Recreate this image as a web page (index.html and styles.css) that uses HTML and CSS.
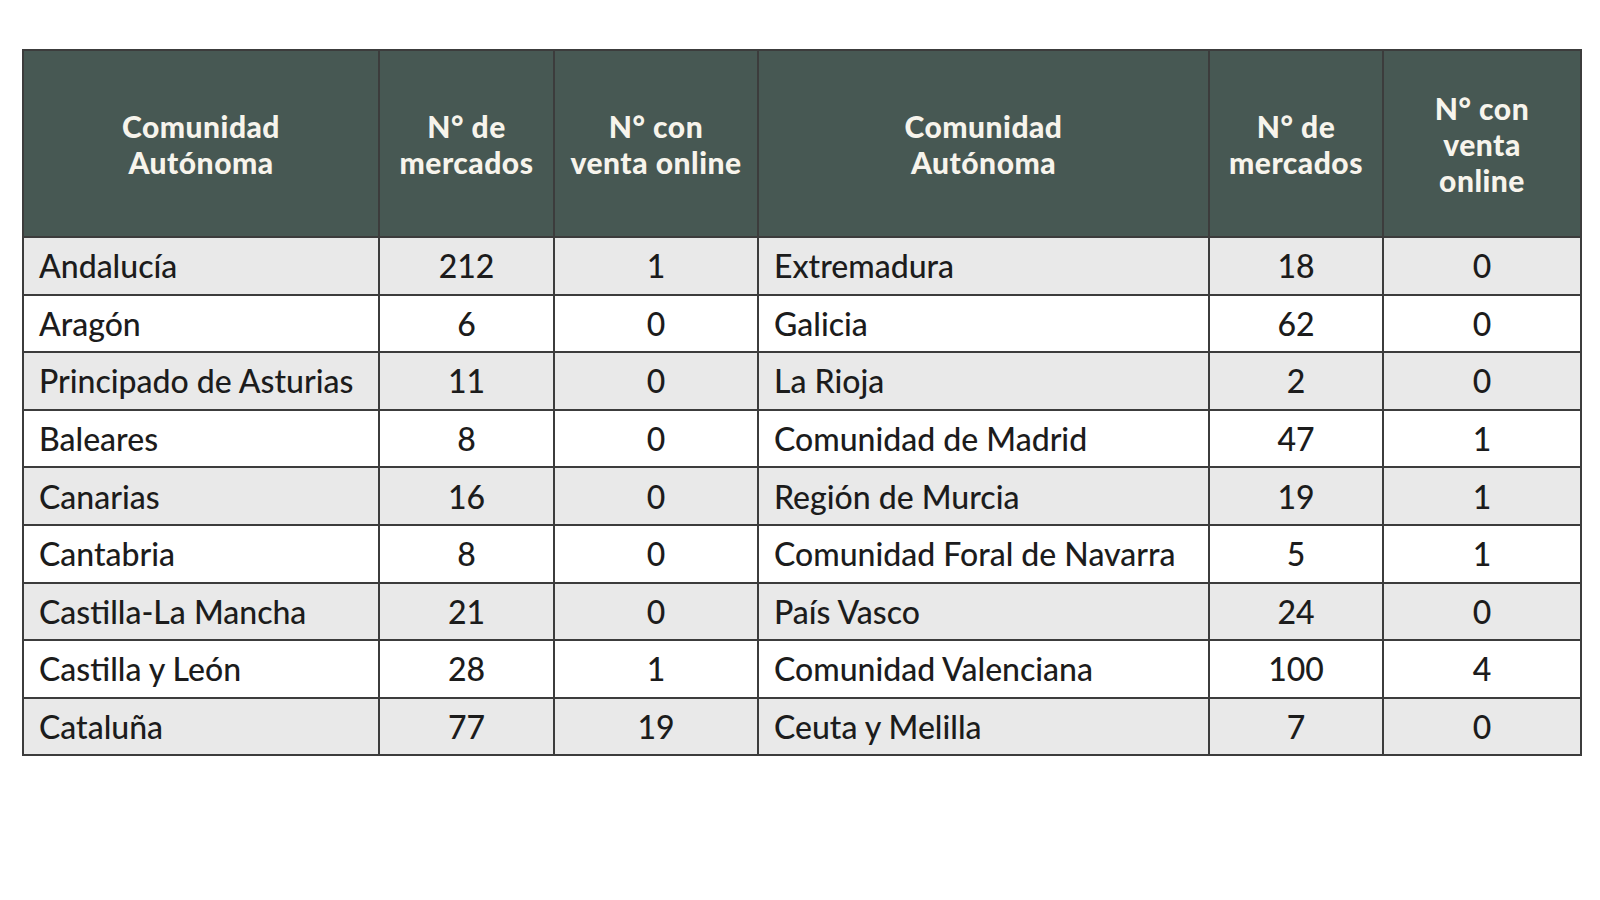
FILE: index.html
```html
<!DOCTYPE html>
<html lang="es">
<head>
<meta charset="utf-8">
<title>Mercados por Comunidad Autónoma</title>
<link rel="stylesheet" href="styles.css">
</head>
<body>
<div class="page">
<table class="markets">
  <colgroup>
    <col class="c1"><col class="c2"><col class="c3"><col class="c4"><col class="c5"><col class="c6">
  </colgroup>
  <thead>
    <tr>
      <th>Comunidad<br>Autónoma</th>
      <th>N° de<br>mercados</th>
      <th>N° con<br>venta online</th>
      <th>Comunidad<br>Autónoma</th>
      <th>N° de<br>mercados</th>
      <th>N° con<br>venta<br>online</th>
    </tr>
  </thead>
  <tbody>
    <tr><td class="name">Andalucía</td><td>212</td><td>1</td><td class="name">Extremadura</td><td>18</td><td>0</td></tr>
    <tr><td class="name">Aragón</td><td>6</td><td>0</td><td class="name">Galicia</td><td>62</td><td>0</td></tr>
    <tr><td class="name">Principado de Asturias</td><td>11</td><td>0</td><td class="name">La Rioja</td><td>2</td><td>0</td></tr>
    <tr><td class="name">Baleares</td><td>8</td><td>0</td><td class="name">Comunidad de Madrid</td><td>47</td><td>1</td></tr>
    <tr><td class="name">Canarias</td><td>16</td><td>0</td><td class="name">Región de Murcia</td><td>19</td><td>1</td></tr>
    <tr><td class="name">Cantabria</td><td>8</td><td>0</td><td class="name">Comunidad Foral de Navarra</td><td>5</td><td>1</td></tr>
    <tr><td class="name">Castilla-La Mancha</td><td>21</td><td>0</td><td class="name">País Vasco</td><td>24</td><td>0</td></tr>
    <tr><td class="name">Castilla y León</td><td>28</td><td>1</td><td class="name">Comunidad Valenciana</td><td>100</td><td>4</td></tr>
    <tr><td class="name">Cataluña</td><td>77</td><td>19</td><td class="name">Ceuta y Melilla</td><td>7</td><td>0</td></tr>
  </tbody>
</table>
</div>
</body>
</html>
```

FILE: styles.css
```css
html, body {
  margin: 0;
  padding: 0;
  background: #ffffff;
}

.page {
  padding: 49px 0 0 22px;
}

.markets {
  border-collapse: collapse;
  table-layout: fixed;
  width: 1558px;
  font-family: "Lato", "Open Sans", sans-serif;
  color: #1c1c1c;
}

.c1 { width: 356px; }
.c2 { width: 175px; }
.c3 { width: 204px; }
.c4 { width: 451px; }
.c5 { width: 174px; }
.c6 { width: 198px; }

.markets th,
.markets td {
  border: 2px solid #3c3c3c;
}

.markets th {
  background: #475853;
  color: #f7f4ec;
  font-weight: 900;
  font-size: 30px;
  letter-spacing: 0.5px;
  line-height: 36px;
  height: 185px;
  padding: 0 2px;
  text-align: center;
  vertical-align: middle;
}

.markets td {
  height: 55.6px;
  padding: 0 4px;
  font-size: 32px;
  font-weight: 500;
  text-align: center;
  vertical-align: middle;
  white-space: nowrap;
}

.markets td.name {
  text-align: left;
  padding-left: 15px;
}

.markets tbody tr:nth-child(odd) td {
  background: #e9e9e9;
}

.markets tbody tr:nth-child(even) td {
  background: #ffffff;
}
```
